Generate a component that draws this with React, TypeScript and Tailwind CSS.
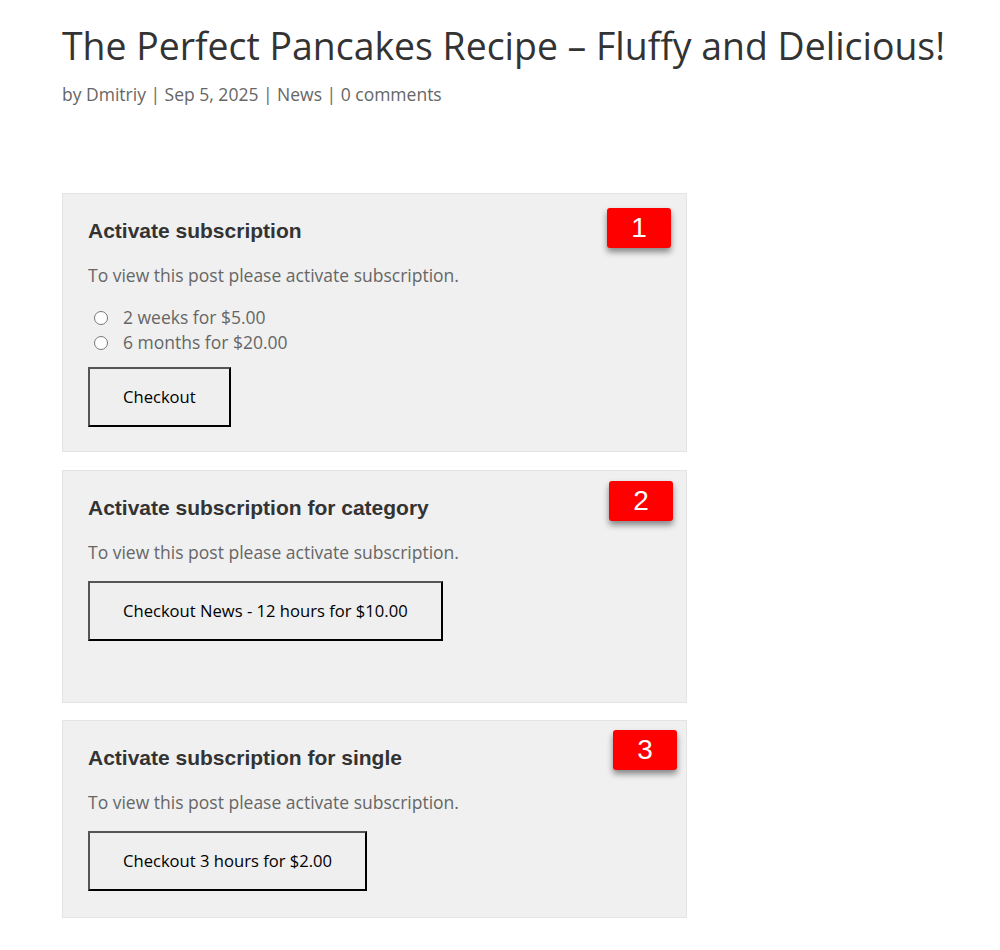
const openSans = "font-['Open_Sans',sans-serif]";
const arial = "font-['Liberation_Sans',Arial,sans-serif]";

function Badge({ n, className }: { n: string; className: string }) {
  return (
    <div
      className={`absolute ${className} w-[64px] h-[40px] rounded-[3px] bg-[#ff0000] text-white text-[28px] leading-[40px] text-center shadow-[0_4px_6px_rgba(0,0,0,0.45)] ${arial}`}
    >
      {n}
    </div>
  );
}

function CheckoutButton({ label }: { label: string }) {
  return (
    <button
      type="button"
      className={`h-[60px] px-[33px] bg-[#efefef] text-black text-[16.6px] border-2 border-t-[#555] border-l-[#555] border-b-black border-r-black ${openSans}`}
    >
      {label}
    </button>
  );
}

function Box({
  title,
  badge,
  badgeClass,
  children,
  bottom,
}: {
  title: string;
  badge: string;
  badgeClass: string;
  children: React.ReactNode;
  bottom: string;
}) {
  return (
    <div className={`relative w-[625px] bg-[#f0f0f0] border border-[#e4e4e4] pl-[25px] pt-[25px] ${bottom}`}>
      <Badge n={badge} className={badgeClass} />
      <h3 className={`text-[21px] leading-[24px] font-bold text-[#333] ${arial}`}>{title}</h3>
      <p className={`mt-[20px] text-[17.5px] leading-[24px] text-[#666] ${openSans}`}>
        To view this post please activate subscription.
      </p>
      {children}
    </div>
  );
}

export default function App() {
  return (
    <div className="min-h-[950px] bg-white pl-[62px] pt-[22px]">
      <h1 className={`text-[37.4px] leading-[48px] text-[#333] ${openSans}`}>
        The Perfect Pancakes Recipe – Fluffy and Delicious!
      </h1>
      <p className={`mt-[12px] text-[17.5px] leading-[24px] text-[#666] ${openSans}`}>
        by Dmitriy | Sep 5, 2025 | News | 0 comments
      </p>

      <div className="mt-[87px] flex flex-col">
        <Box title="Activate subscription" badge="1" badgeClass="top-[14px] right-[15px]" bottom="pb-[24px]">
          <div className={`mt-[18px] flex flex-col text-[17.5px] leading-[25px] text-[#666] ${openSans}`}>
            {["2 weeks for $5.00", "6 months for $20.00"].map((o) => (
              <label key={o} className="flex items-center">
                <input type="radio" name="plan" className="ml-[6px] mr-[15px] w-[14px] h-[14px] m-0" />
                {o}
              </label>
            ))}
          </div>
          <div className="mt-[12px]">
            <CheckoutButton label="Checkout" />
          </div>
        </Box>

        <div className="mt-[18px]">
          <Box
            title="Activate subscription for category"
            badge="2"
            badgeClass="top-[10px] right-[13px]"
            bottom="pb-[61px]"
          >
            <div className="mt-[17px]">
              <CheckoutButton label="Checkout News - 12 hours for $10.00" />
            </div>
          </Box>
        </div>

        <div className="mt-[17px]">
          <Box
            title="Activate subscription for single"
            badge="3"
            badgeClass="top-[9px] right-[9px]"
            bottom="pb-[26px]"
          >
            <div className="mt-[17px]">
              <CheckoutButton label="Checkout 3 hours for $2.00" />
            </div>
          </Box>
        </div>
      </div>
    </div>
  );
}
